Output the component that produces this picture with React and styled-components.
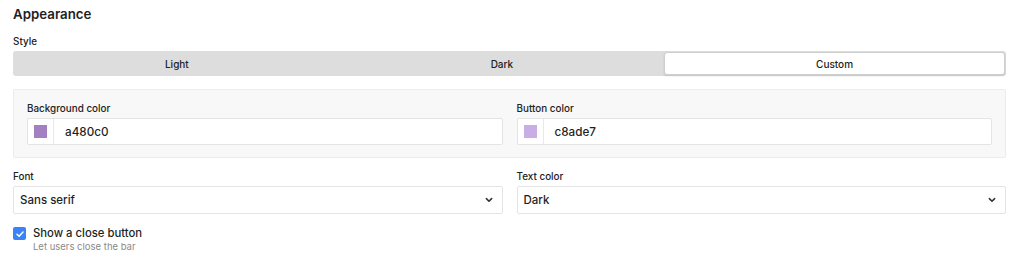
import React from "react";
import styled, { createGlobalStyle } from "styled-components";

const Global = createGlobalStyle`
  html, body { margin: 0; padding: 0; background: #fff; }
  body { font-family: Inter, "Noto Sans", sans-serif; color: #1f1f1f; -webkit-font-smoothing: antialiased; }
  * { box-sizing: border-box; }
`;

const Page = styled.div`
  width: 993px;
  margin-left: 13px;
  padding-top: 5px;
  display: flex;
  flex-direction: column;
`;

const Title = styled.h2`
  margin: 0;
  font-size: 13.3px;
  font-weight: 600;
  line-height: 18px;
  color: #1f1f1f;
`;

const Label = styled.div`
  font-size: 9.9px;
  font-weight: 500;
  line-height: 13px;
  color: #222;
  margin-bottom: ${(p) => p.$mb ?? 3}px;
`;

const Section = styled.div`
  margin-top: ${(p) => p.$mt || 0}px;
`;

const Segmented = styled.div`
  display: flex;
  height: 25px;
  background: #dddddd;
  border-radius: 3px;
  padding: 1px;
`;

const Segment = styled.button`
  flex: 1 1 auto;
  border: ${(p) => (p.$active ? "1px solid #cfcfcf" : "none")};
  background: ${(p) => (p.$active ? "#fff" : "transparent")};
  border-radius: 3px;
  box-shadow: ${(p) => (p.$active ? "0 1px 2px rgba(0,0,0,0.12)" : "none")};
  font-family: inherit;
  font-size: 10px;
  font-weight: 500;
  color: #222;
  padding: 0;
  cursor: pointer;
`;

const Panel = styled.div`
  margin-top: 13px;
  background: #f8f8f8;
  border: 1px solid #ececec;
  border-radius: 2px;
  padding: 12px 13px 12px 13px;
`;

const Grid = styled.div`
  display: grid;
  grid-template-columns: 1fr 1fr;
  column-gap: 14px;
`;

const ColorInput = styled.div`
  display: flex;
  align-items: center;
  height: 27px;
  background: #fff;
  border: 1px solid #e4e4e4;
  border-radius: 2px;
`;

const SwatchCell = styled.div`
  width: 26px;
  height: 100%;
  display: flex;
  align-items: center;
  justify-content: center;
  border-right: 1px solid #e8e8e8;
`;

const Swatch = styled.span`
  width: 13px;
  height: 13px;
  background: ${(p) => p.$color};
`;

const ValueText = styled.span`
  font-size: 11.7px;
  font-weight: 500;
  color: #1f1f1f;
  padding-left: 11px;
`;

const Select = styled.div`
  display: flex;
  align-items: center;
  justify-content: space-between;
  height: 28px;
  background: #fff;
  border: 1px solid #e4e4e4;
  border-radius: 2px;
  padding: 0 9px 0 6px;
  font-size: 11.5px;
  font-weight: 500;
  color: #1f1f1f;
`;

const CheckRow = styled.div`
  display: flex;
  align-items: flex-start;
  gap: 7px;
  margin-top: 12px;
`;

const Box = styled.span`
  width: 13px;
  height: 13px;
  margin-top: 1px;
  border-radius: 2px;
  background: #3b82f6;
  display: flex;
  align-items: center;
  justify-content: center;
`;

const CheckText = styled.div`
  display: flex;
  flex-direction: column;
`;

const CheckTitle = styled.span`
  font-size: 11.3px;
  font-weight: 500;
  line-height: 15px;
  color: #1f1f1f;
`;

const CheckSub = styled.span`
  font-size: 9.5px;
  line-height: 12px;
  color: #8a8a8a;
`;

const Chevron = () => (
  <svg width="8" height="6" viewBox="0 0 8 6">
    <path d="M1.4 1.6 L4 4.2 L6.6 1.6" fill="none" stroke="#333" strokeWidth="1.6" strokeLinecap="round" strokeLinejoin="round" />
  </svg>
);

const Check = () => (
  <svg width="10" height="10" viewBox="0 0 10 10">
    <path d="M2 5.2 L4.1 7.2 L8 3" fill="none" stroke="#fff" strokeWidth="1.5" strokeLinecap="round" strokeLinejoin="round" />
  </svg>
);

export default function App() {
  return (
    <>
      <Global />
      <Page>
        <Title>Appearance</Title>
        <Section $mt={12}>
          <Label $mb={3}>Style</Label>
          <Segmented>
            <Segment>Light</Segment>
            <Segment>Dark</Segment>
            <Segment $active>Custom</Segment>
          </Segmented>
        </Section>
        <Panel>
          <Grid>
            <div>
              <Label>Background color</Label>
              <ColorInput>
                <SwatchCell>
                  <Swatch $color="#a480c0" />
                </SwatchCell>
                <ValueText>a480c0</ValueText>
              </ColorInput>
            </div>
            <div>
              <Label>Button color</Label>
              <ColorInput>
                <SwatchCell>
                  <Swatch $color="#c8ade7" />
                </SwatchCell>
                <ValueText>c8ade7</ValueText>
              </ColorInput>
            </div>
          </Grid>
        </Panel>
        <Section $mt={12}>
          <Grid>
            <div>
              <Label>Font</Label>
              <Select>
                <span>Sans serif</span>
                <Chevron />
              </Select>
            </div>
            <div>
              <Label>Text color</Label>
              <Select>
                <span>Dark</span>
                <Chevron />
              </Select>
            </div>
          </Grid>
        </Section>
        <CheckRow>
          <Box>
            <Check />
          </Box>
          <CheckText>
            <CheckTitle>Show a close button</CheckTitle>
            <CheckSub>Let users close the bar</CheckSub>
          </CheckText>
        </CheckRow>
      </Page>
    </>
  );
}
